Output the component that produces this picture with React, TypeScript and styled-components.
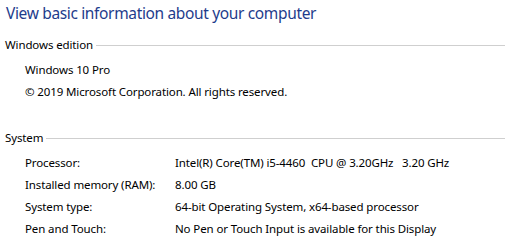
import React from "react";
import styled, { createGlobalStyle } from "styled-components";

const Global = createGlobalStyle`
  html, body { margin: 0; padding: 0; background: #ffffff; }
  body { font-family: "Noto Sans", "Open Sans", sans-serif; color: #000; }
`;

const Page = styled.div`
  width: 505px;
  height: 247px;
  overflow: hidden;
  padding: 0 0 0 5px;
  box-sizing: border-box;
`;

const Title = styled.h1`
  margin: 0;
  padding: 1px 0 0 1px;
  font-weight: 400;
  font-size: 15.5px;
  letter-spacing: -0.35px;
  line-height: 24px;
  color: #1e3c8c;
  white-space: nowrap;
`;

const Section = styled.section<{ $gap: number }>`
  margin-top: ${(p) => p.$gap}px;
`;

const Header = styled.div`
  display: flex;
  align-items: center;
  gap: 3px;
  font-size: 11.5px;
  letter-spacing: -0.12px;
  line-height: 16px;
  white-space: nowrap;
`;

const Rule = styled.div`
  flex: 1;
  height: 1px;
  background: #cfcfcf;
  margin-top: 1px;
`;

const Rows = styled.div<{ $top: number }>`
  display: grid;
  grid-template-columns: 150px auto;
  padding: ${(p) => p.$top}px 0 0 20px;
  font-size: 11.5px;
  letter-spacing: -0.12px;
  line-height: 22px;
  white-space: nowrap;
`;

const Cell = styled.div<{ $span?: boolean }>`
  grid-column: ${(p) => (p.$span ? "1 / span 2" : "auto")};
`;

export default function App() {
  return (
    <Page>
      <Global />
      <Title>View basic information about your computer</Title>
      <Section $gap={12}>
        <Header>
          Windows edition
          <Rule />
        </Header>
        <Rows $top={6}>
          <Cell $span>Windows 10 Pro</Cell>
          <Cell $span>© 2019 Microsoft Corporation. All rights reserved.</Cell>
        </Rows>
      </Section>
      <Section $gap={27}>
        <Header>
          System
          <Rule />
        </Header>
        <Rows $top={6}>
          <Cell>Processor:</Cell>
          <Cell>Intel(R) Core(TM) i5-4460&nbsp; CPU @ 3.20GHz&nbsp;&nbsp; 3.20 GHz</Cell>
          <Cell>Installed memory (RAM):</Cell>
          <Cell>8.00 GB</Cell>
          <Cell>System type:</Cell>
          <Cell>64-bit Operating System, x64-based processor</Cell>
          <Cell>Pen and Touch:</Cell>
          <Cell>No Pen or Touch Input is available for this Display</Cell>
        </Rows>
      </Section>
    </Page>
  );
}
